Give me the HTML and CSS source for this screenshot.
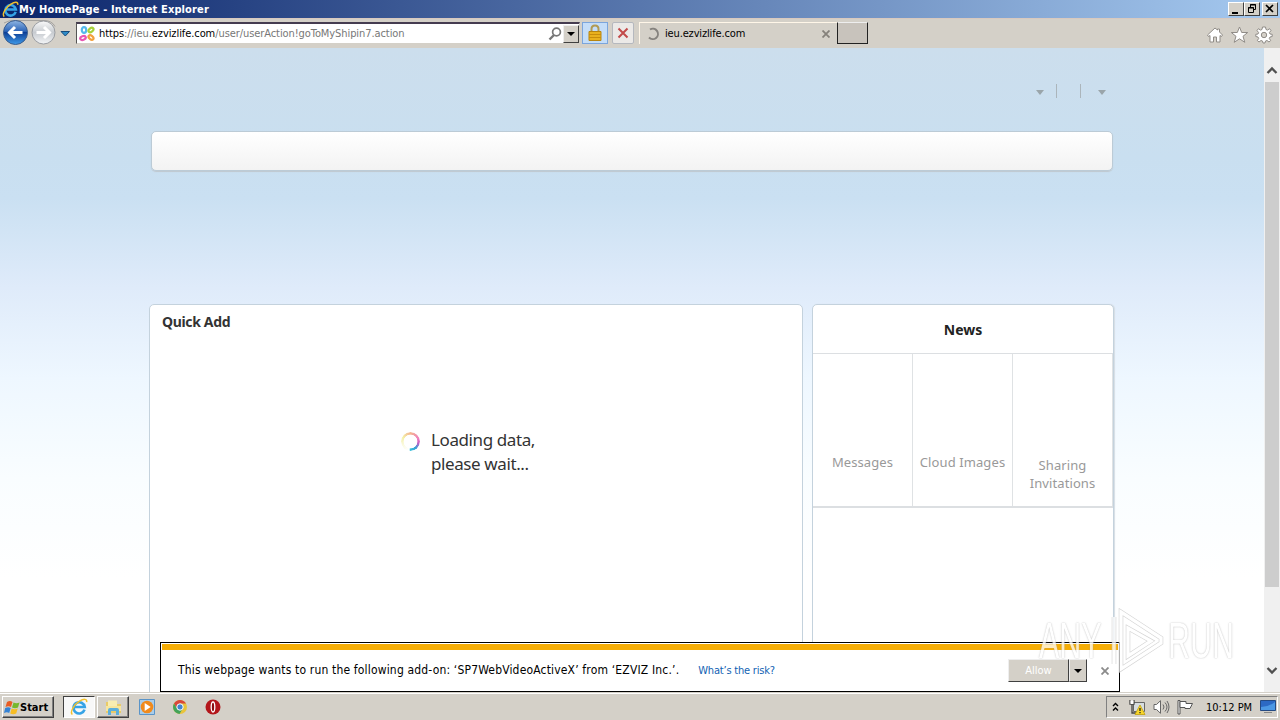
FILE: index.html
```html
<!DOCTYPE html>
<html lang="en">
<head>
  <meta charset="UTF-8">
  <meta name="viewport" content="width=device-width, initial-scale=1">
  <title>My HomePage - Internet Explorer</title>
  <link rel="stylesheet" href="styles.css">
</head>
<body>
  <svg width="0" height="0" class="defs">
    <defs>
      <linearGradient id="blueBall" x1="0" y1="0" x2="0" y2="1">
        <stop offset="0" stop-color="#8fb6e3"/><stop offset=".45" stop-color="#2c64b8"/>
        <stop offset=".5" stop-color="#0d3f96"/><stop offset="1" stop-color="#3f9bea"/>
      </linearGradient>
      <linearGradient id="greyBall" x1="0" y1="0" x2="0" y2="1">
        <stop offset="0" stop-color="#fafafa"/><stop offset=".5" stop-color="#c7cbd0"/><stop offset="1" stop-color="#f4f6f8"/>
      </linearGradient>
      <symbol id="ie" viewBox="0 0 18 18">
        <path d="M14.5 11.6A5.6 5.6 0 1 1 14.7 9H5" fill="none" stroke="#36a3e6" stroke-width="2.7"/>
        <path d="M2.4 16.5C-.5 14.3 4 6.500 9.500 3.200 13.500.7 17.400.5 16.600 4.200" fill="none" stroke="#f2c12e" stroke-width="1.5"/>
      </symbol>
      <symbol id="drop" viewBox="0 0 8 4"><path d="M0 0h8L4 4z"/></symbol>
    </defs>
  </svg>

  <div class="titlebar">
    <svg class="title-icon" width="17" height="17"><use href="#ie"/></svg>
    <span class="title-text">My HomePage - Internet Explorer</span>
    <div class="win-buttons">
      <span class="win-btn"><svg width="14" height="12"><path d="M3 9h6v2H3z"/></svg></span>
      <span class="win-btn"><svg width="14" height="12" fill="none" stroke="#000"><path d="M5.500 4V1.500h5v5H9M5 2h6"/><path d="M3.500 4.500h5v5h-5zM3 5h6"/></svg></span>
      <span class="win-btn close"><svg width="14" height="12"><path d="M3 2l7 7M10 2L3 9" stroke="#000" stroke-width="1.700"/></svg></span>
    </div>
  </div>

  <div class="toolbar">
    <svg class="nav-balls" width="76" height="28" viewBox="0 0 76 28">
      <path d="M4 4Q9 1 15 1.500h29q8 0 11 6" fill="none" stroke="#a5a3a0"/>
      <circle cx="15.500" cy="13.500" r="12" fill="url(#blueBall)" stroke="#395c8d"/>
      <path d="M22.500 13.500H10M15 8L9.500 13.500 15 19" fill="none" stroke="#fff" stroke-width="3"/>
      <circle cx="43.500" cy="13.500" r="11.500" fill="url(#greyBall)" stroke="#999ca1"/>
      <path d="M36.500 13.500h12M44 8l5.500 5.500L44 19" fill="none" stroke="#fff" stroke-width="3"/>
      <path d="M61 12.500h8.500L65.300 17z" fill="#2d8bc8" stroke="#174b7b"/>
    </svg>
    <div class="address">
      <svg width="16" height="16" viewBox="0 0 16 16" fill="none" stroke-width="2.200">
        <ellipse cx="5" cy="4" rx="2.200" ry="2.800" stroke="#55b9ec"/>
        <ellipse cx="12" cy="4" rx="2.800" ry="1.800" stroke="#a6d13a" transform="rotate(-40 12 4)"/>
        <ellipse cx="4" cy="12" rx="2.900" ry="1.900" stroke="#e957b3" transform="rotate(-20 4 12)"/>
        <ellipse cx="12" cy="11.500" rx="2.800" ry="1.800" stroke="#f3a03c" transform="rotate(40 12 11.500)"/>
      </svg>
      <span class="url"><b>https</b>://ieu.<b>ezvizlife.com</b>/user/userAction!goToMyShipin7.action</span>
      <svg class="search" width="14" height="14" viewBox="0 0 14 14" fill="none" stroke="#777"><circle cx="8.500" cy="5" r="3.900" stroke-width="1.700"/><path d="M6 8L1.500 12.500" stroke-width="2.400"/></svg>
      <span class="select-btn"><svg width="8" height="4"><use href="#drop"/></svg></span>
    </div>
    <span class="lock">
      <svg width="14" height="18" viewBox="0 0 14 18"><path d="M3.500 8V5q0-3.500 3.500-3.500T10.500 5v3" fill="none" stroke="#b19a52" stroke-width="2"/><path d="M1 7.500h12v9H1z" fill="#e9b11e" stroke="#b78510"/><path d="M1 10.500h12M1 13.500h12" stroke="#c88d0c"/></svg>
    </span>
    <span class="stop"><svg width="12" height="12"><path d="M1.500 1.500l9 9M10.500 1.500l-9 9" stroke="#c24a4a" stroke-width="2"/></svg></span>
    <div class="tab">
      <svg width="14" height="14" viewBox="0 0 14 14"><path d="M4 2.500A5.200 5.200 0 1 1 3 10.500" fill="none" stroke="#85827e" stroke-width="2"/></svg>
      <span class="tab-text">ieu.ezvizlife.com</span>
      <svg class="tab-close" width="8" height="8"><path d="M.5.5l7 7M7.500.5l-7 7" stroke="#85817b" stroke-width="1.800"/></svg>
    </div>
    <span class="new-tab"></span>
    <svg class="tools" width="68" height="18" viewBox="0 0 68 18" fill="#fff" stroke="#908c87">
      <path d="M1.500 9L9 2l2.500 2V3h2v3l3 3-1 1.500-1.500-1V16h-3.500v-5h-3v5H4V9.500l-1.500 1z"/>
      <path d="M33.500 1l2.200 5.500h6l-4.700 3.800 1.800 6-5.300-3.500-5.300 3.500 1.800-6-4.700-3.800h6z"/>
      <g transform="translate(58 9)">
        <path d="M-1.500-8h3l.5 2.500 1.500.6L5.600-6.300 7-4.400 5.400-2.500 6-1l2.200.3v2.200L6 2l-.7 1.500 1.400 2L5 7 3 5.500 1.500 6 1 8h-2l-.5-2L-3 5.500-5 7l-1.700-1.500 1.400-2L-6 2l-2.200-.5V-.7L-6-1l.6-1.500L-7-4.400l1.400-1.900L-3.500-4.900-2-5.500z"/>
        <circle r="2.700" fill="#d4d0c8"/>
      </g>
    </svg>
  </div>

  <div class="viewport">
    <div class="page">
      <div class="user-links">
        <svg width="8" height="5" viewBox="0 0 8 5"><path d="M0 0h8L4 5z"/></svg>
        <i class="sep"></i>
        <i class="sep second"></i>
        <svg width="8" height="5" viewBox="0 0 8 5"><path d="M0 0h8L4 5z"/></svg>
      </div>
      <div class="menu"></div>
      <div class="columns">
        <section class="card quick">
          <h2>Quick Add</h2>
          <div class="loading">
            <span class="spinner"></span>
            <p>Loading data,<br>please wait...</p>
          </div>
        </section>
        <section class="card news">
          <h2>News</h2>
          <div class="news-grid">
            <div>Messages</div>
            <div>Cloud Images</div>
            <div class="two-lines">Sharing<br>Invitations</div>
          </div>
        </section>
      </div>
    </div>
    <div class="scrollbar">
      <svg width="12" height="9" viewBox="0 0 12 9"><path d="M1.500 7L6 2.500 10.500 7" fill="none" stroke="#505050" stroke-width="2.300"/></svg>
      <div class="thumb"></div>
      <svg class="down" width="12" height="9" viewBox="0 0 12 9"><path d="M1.500 2L6 6.500 10.500 2" fill="none" stroke="#505050" stroke-width="2.300"/></svg>
    </div>

    <div class="notice">
      <div class="notice-body">
        <span class="notice-text">This webpage wants to run the following add-on: ‘SP7WebVideoActiveX’ from ‘EZVIZ Inc.’.</span>
        <a class="risk">What’s the risk?</a>
        <span class="allow"><span>Allow</span></span>
        <span class="allow-more"><svg width="8" height="4"><use href="#drop"/></svg></span>
        <svg class="notice-close" width="8" height="8"><path d="M.5.5l7 7M7.500.5l-7 7" stroke="#8b8b8b" stroke-width="1.800"/></svg>
      </div>
    </div>

    <div class="watermark">
      <span class="any">ANY</span>
      <svg width="58" height="66" viewBox="0 0 58 66" fill="none">
        <g stroke="#c4c4c4" stroke-width="4.500"><path d="M7 9v47M14 4l40 26v5L14 61z"/><path d="M21 20v28l23-15z"/></g>
        <g stroke="#fff" stroke-width="3.300"><path d="M7 9v47M14 4l40 26v5L14 61z"/><path d="M21 20v28l23-15z"/></g>
      </svg>
      <span class="run">RUN</span>
    </div>
  </div>

  <div class="taskbar">
    <div class="start">
      <svg width="16" height="15" viewBox="0 0 16 15"><path d="M3 2q3-2 5.500 0L7 7Q4.500 5.500 1.500 7z" fill="#e95d24"/><path d="M9.500 2.500q3 1.500 6 0L14 7.500q-3 1.500-6 0z" fill="#76b82d"/><path d="M1.200 8q3-1.500 5.500 0l-1.500 5Q3 11.500 0 13z" fill="#3583d5"/><path d="M7.700 8.500q3 1.500 6 0l-1.500 5q-3 1.500-6 0z" fill="#f6bd24"/></svg>
      <span>Start</span>
    </div>
    <div class="task active"><svg width="18" height="18"><use href="#ie"/></svg></div>
    <div class="task">
      <svg width="17" height="17" viewBox="0 0 17 17"><path d="M1 3h6l1 2h8v9H1z" fill="#e9cb68"/><path d="M3 1.500h9V7H3z" fill="#f9edb1"/><path d="M1 7h15v5H1z" fill="#f7e69e"/><path d="M3 16v-5q0-2 2-2h7q2 0 2 2v5h-3v-4H6v4z" fill="#5caedb"/></svg>
    </div>
    <svg class="quick-icon" width="16" height="16" viewBox="0 0 16 16"><path d="M.5.5h15v15H.5z" fill="#a9cdea" stroke="#5a94c8"/><circle cx="8" cy="8" r="6.300" fill="#f08a1c"/><path d="M5.700 4v8l6-4z" fill="#fff"/></svg>
    <svg class="quick-icon" width="14" height="14" viewBox="0 0 14 14"><circle cx="7" cy="7" r="7" fill="#e9c43b"/><path d="M1 3.500A7 7 0 0 1 13 3.500H7L4 8.500z" fill="#d9473b"/><path d="M1 3.500A7 7 0 0 0 6.500 14L9.500 9 4 8.500z" fill="#43a35a"/><circle cx="7" cy="7" r="3.200" fill="#4284cf" stroke="#fff"/></svg>
    <svg class="quick-icon" width="16" height="16" viewBox="0 0 16 16"><circle cx="8" cy="8" r="7.500" fill="#b3161b"/><ellipse cx="8" cy="8" rx="1.800" ry="5" fill="#8b0c10" stroke="#fff" stroke-width="1.300"/></svg>
    <div class="tray">
      <svg width="8" height="10" viewBox="0 0 8 10" fill="none" stroke="#000" stroke-width="1.400"><path d="M1 4l2.500-2.500L6 4M1 8.500L3.500 6 6 8.500"/></svg>
      <svg class="network" width="17" height="16" viewBox="0 0 17 16"><path d="M4.500 3.500h11v9h-11z" fill="#d7dde0" stroke="#666"/><path d="M1 1v4h4V1M3 5v9h5" fill="none" stroke="#444" stroke-width="1.300"/><path d="M1.500 1.500h3V5h-3z" fill="#fff"/><path d="M11 6l5 9.500H6z" fill="#f8d62b" stroke="#c1a00c" stroke-width=".8"/><path d="M11 9v3M11 13v1.300" stroke="#222" stroke-width="1.300"/></svg>
      <svg class="volume" width="17" height="14" viewBox="0 0 17 14" fill="#fff" stroke="#666"><path d="M1 4.500h2.500L7.500.7v12.600L3.500 9.500H1z"/><path d="M10 4.500q2 2.500 0 5M12 2.500q4 4.500 0 9M14 1q4 6 0 12" fill="none"/></svg>
      <svg class="flag" width="17" height="15" viewBox="0 0 17 15" fill="#fff" stroke="#555"><path d="M1 .5h2V14H1z"/><path d="M3 1.500h6v2h6.500L13 8.500H8V7.500H3z"/></svg>
      <span class="clock">10:12 PM</span>
      <svg class="desktop" width="16" height="14" viewBox="0 0 16 14"><path d="M.5.500h15v10H.5z" fill="#2c69c4" stroke="#244a83"/><path d="M1 7Q8 7 15 2v8H1z" fill="#4c98e4"/><path d="M4 12.500h8" stroke="#888"/></svg>
    </div>
  </div>
</body>
</html>
```
FILE: styles.css
```css
* {
  box-sizing: border-box;
}

body {
  margin: 0;
  width: 1280px;
  height: 720px;
  overflow: hidden;
  display: flex;
  flex-direction: column;
  font-family: "DejaVu Sans Condensed", "DejaVu Sans", sans-serif;
  font-size: 11px;
  color: #000;
  background: #d4d0c8;
}

svg {
  display: block;
  flex: none;
}

.defs {
  position: absolute;
}

/* window frame */
.titlebar {
  height: 18px;
  flex: none;
  display: flex;
  align-items: center;
  padding: 0 2px;
  background: linear-gradient(to right, #0a246a, #a6caf0);
  color: #fff;
  font-weight: bold;
  white-space: nowrap;
}

.title-text {
  letter-spacing: 0.12px;
}

.win-buttons {
  display: flex;
  margin-left: auto;
}

.win-btn {
  width: 16px;
  height: 14px;
  background: #d4d0c8;
  border: 1px solid;
  border-color: #fff #404040 #404040 #fff;
}

.win-btn.close {
  margin-left: 2px;
}

.toolbar {
  height: 30px;
  flex: none;
  display: flex;
  align-items: center;
  padding-bottom: 1px;
  background: #d4d0c8;
  border-top: 1px solid #d9c9bf;
}

.address {
  width: 504px;
  height: 22px;
  display: flex;
  align-items: center;
  padding-left: 2px;
  background: #fff;
  border: 1px solid #d4d0c8;
  border-top: 2px solid #453c50;
  border-left: 1px solid #555;
}

.url {
  margin-left: 4px;
  color: #777;
  letter-spacing: -0.08px;
  white-space: nowrap;
}

.url b {
  font-weight: normal;
  color: #000;
}

.search {
  margin-left: auto;
}

.select-btn {
  width: 16px;
  height: 18px;
  margin-left: 1px;
  display: flex;
  align-items: center;
  justify-content: center;
  background: #d4d0c8;
  border: 1px solid;
  border-color: #eee #404040 #404040 #eee;
}

.lock {
  width: 26px;
  height: 22px;
  margin-left: 2px;
  display: flex;
  align-items: center;
  justify-content: center;
  background: #c4ddf8;
  border: 1px solid #7ba5dc;
}

.stop {
  width: 22px;
  height: 22px;
  margin-left: 4px;
  display: flex;
  align-items: center;
  justify-content: center;
  background: #ebe9e7;
  border: 1px solid #b5b8be;
  border-radius: 2px;
}

.tab {
  width: 198px;
  height: 22px;
  margin-left: 5px;
  display: flex;
  align-items: center;
  padding: 0 7px 0 6px;
  border-top: 1px solid #fff6e8;
  border-left: 1px solid #fff6e8;
}

.tab-text {
  margin-left: 5px;
  letter-spacing: -0.15px;
}

.tab-close {
  margin-left: auto;
}

.new-tab {
  width: 31px;
  height: 22px;
  background: #c8c3bc;
  border: 1px solid #222;
  border-top-color: #eee;
  border-left-width: 1px;
}

.tools {
  margin-left: auto;
  margin-right: 6px;
  margin-top: 4px;
}

/* page */
.viewport {
  height: 644px;
  flex: none;
  display: flex;
  position: relative;
  background: #fff;
}

.page {
  width: 1264px;
  height: 644px;
  overflow: hidden;
  background: linear-gradient(#ccdeed 0, #c9dff0 110px, #cae0f2 150px, #dfebfa 240px, #eef7ff 330px, #f9fdff 430px, #fff 530px);
  font-family: "Noto Sans", sans-serif;
  color: #333;
}

.user-links {
  height: 83px;
  padding: 36px 0 0 1036px;
  display: flex;
  align-items: flex-start;
  fill: #9aa5aa;
}

.user-links svg {
  margin-top: 6px;
}

.sep {
  width: 1px;
  height: 14px;
  margin-left: 12px;
  background: #abb5bb;
}

.sep.second {
  margin: 0 17px 0 23px;
}

.menu {
  width: 962px;
  height: 40px;
  margin-left: 151px;
  background: linear-gradient(#fff, #f3f3f3);
  border: 1px solid #bccbd6;
  border-radius: 5px;
  box-shadow: 0 1px 1px #bfc8cf;
}

.columns {
  display: flex;
  align-items: flex-start;
  gap: 9px;
  padding: 133px 0 0 149px;
}

.card {
  height: 420px;
  background: #fff;
  border: 1px solid #c4d2dd;
  border-radius: 5px;
}

.card h2 {
  margin: 0;
  font-size: 14px;
  line-height: 20px;
}

.quick {
  width: 654px;
}

.quick h2 {
  padding: 7px 0 0 12px;
  letter-spacing: -0.35px;
}

.loading {
  display: flex;
  padding: 96px 0 0 251px;
}

.loading p {
  margin: 0 0 0 11px;
  font-size: 17px;
  line-height: 24px;
  letter-spacing: -0.4px;
}

.spinner {
  width: 19px;
  height: 19px;
  margin-top: 4px;
  border-radius: 50%;
  background: conic-gradient(#f4b590, #ef7fc0 70deg, #c65ec4 100deg, #3c9fd8 140deg, #36bfd8 180deg, #fff 190deg, #fbfbe5 240deg, #f4f0a8 300deg, #f4b590);
  mask: radial-gradient(circle, transparent 6.6px, #000 7.2px);
}

.news {
  width: 302px;
  box-shadow: 1px 0 1px #d5dde4;
}

.news h2 {
  height: 48px;
  padding-top: 15px;
  text-align: center;
  color: #222;
}

.news-grid {
  height: 155px;
  display: grid;
  grid-template-columns: repeat(3, 100px);
  border-top: 1px solid #dcdfe2;
  border-bottom: 2px solid #dcdfe2;
  color: #999;
  font-size: 13px;
  line-height: 18px;
  letter-spacing: 0.1px;
  text-align: center;
  white-space: nowrap;
}

.news-grid div {
  padding-top: 99px;
  border-right: 1px solid #dfe2e4;
}

.news-grid .two-lines {
  padding-top: 102px;
}

.scrollbar {
  width: 16px;
  display: flex;
  flex-direction: column;
  align-items: center;
  padding: 18px 0;
  background: #f0f0f0;
}

.thumb {
  width: 14px;
  height: 505px;
  margin-top: 7px;
  background: #cdcdcd;
}

.down {
  margin-top: auto;
  margin-bottom: -1px;
}

/* add-on prompt, floats over the page */
.notice {
  position: absolute;
  left: 160px;
  top: 594px;
  width: 960px;
  height: 50px;
  padding: 1px;
  background: #fff;
  border: 1px solid #000;
}

.notice-body {
  height: 46px;
  display: flex;
  align-items: center;
  padding: 1px 9px 0 16px;
  border-top: 6px solid #f5ad05;
  white-space: nowrap;
}

.notice-text {
  margin-bottom: 2px;
  font-size: 12px;
  letter-spacing: 0.17px;
}

.risk {
  margin-left: 19px;
  margin-bottom: 1px;
  color: #1262b3;
  letter-spacing: -0.2px;
}

.allow,
.allow-more {
  height: 23px;
  display: flex;
  align-items: center;
  justify-content: center;
  background: #d4d0c8;
  border: 1px solid;
  border-color: #eee #404040 #404040 #eee;
}

.allow {
  width: 61px;
  margin-left: auto;
  color: #fff;
}

.allow-more {
  width: 18px;
}

.notice-close {
  margin-left: 14px;
}

.watermark {
  position: absolute;
  left: 1039px;
  top: 560px;
  display: flex;
  align-items: center;
  font: 50px/40px "Liberation Sans", Arial, sans-serif;
  color: #fff;
  text-shadow: 0 0 2px #999;
  opacity: 0.75;
}

.watermark svg {
  margin-left: 2px;
}

.any,
.run {
  width: 66px;
  transform: scaleX(0.61);
  transform-origin: left;
}

.run {
  margin-left: 3px;
}

/* taskbar */
.taskbar {
  height: 28px;
  flex: none;
  display: flex;
  align-items: center;
  padding: 1px 2px 0;
  background: #d4d0c8;
  border-top: 1px solid #d4d0c8;
  box-shadow: inset 0 1px #fff;
}

.start,
.task {
  height: 22px;
  display: flex;
  align-items: center;
  border: 1px solid;
  border-color: #fff #404040 #404040 #fff;
  box-shadow: inset -1px -1px #808080;
}

.start {
  width: 52px;
  padding-left: 1px;
  font-weight: bold;
}

.task {
  width: 32px;
  justify-content: center;
}

.task.active {
  margin-left: 9px;
  margin-right: 2px;
  background: #f8f8f8;
  border-color: #404040 #fff #fff #404040;
  box-shadow: none;
}

.quick-icon {
  margin-left: 10px;
}

.quick-icon + .quick-icon {
  margin-left: 18px;
}

.tray {
  width: 172px;
  height: 22px;
  margin-left: auto;
  display: flex;
  align-items: center;
  padding-left: 5px;
  border: 1px solid;
  border-color: #808080 #fff #fff #808080;
}

.network {
  margin-left: 9px;
}

.volume {
  margin-left: 7px;
}

.flag {
  margin-left: 7px;
}

.clock {
  width: 46px;
  margin-left: 12px;
  white-space: nowrap;
}

.desktop {
  margin-left: 8px;
}
```
